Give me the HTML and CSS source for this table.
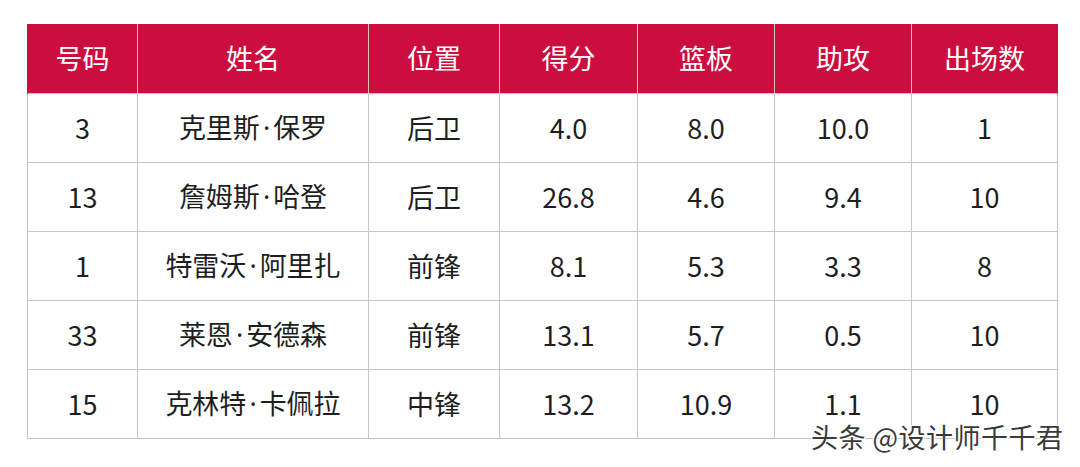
FILE: index.html
```html
<!DOCTYPE html>
<html lang="zh-CN">
<head>
<meta charset="utf-8">
<link rel="stylesheet" href="styles.css">
</head>
<body>
<div class="page">
  <table class="stats">
    <colgroup>
      <col style="width:110px"><col style="width:231px"><col style="width:131px"><col style="width:138px"><col style="width:137px"><col style="width:137px"><col style="width:146px">
    </colgroup>
    <thead>
      <tr><th>号码</th><th>姓名</th><th>位置</th><th>得分</th><th>篮板</th><th>助攻</th><th>出场数</th></tr>
    </thead>
    <tbody>
      <tr><td>3</td><td>克里斯<span class="dot">·</span>保罗</td><td>后卫</td><td>4.0</td><td>8.0</td><td>10.0</td><td>1</td></tr>
      <tr><td>13</td><td>詹姆斯<span class="dot">·</span>哈登</td><td>后卫</td><td>26.8</td><td>4.6</td><td>9.4</td><td>10</td></tr>
      <tr><td>1</td><td>特雷沃<span class="dot">·</span>阿里扎</td><td>前锋</td><td>8.1</td><td>5.3</td><td>3.3</td><td>8</td></tr>
      <tr><td>33</td><td>莱恩<span class="dot">·</span>安德森</td><td>前锋</td><td>13.1</td><td>5.7</td><td>0.5</td><td>10</td></tr>
      <tr><td>15</td><td>克林特<span class="dot">·</span>卡佩拉</td><td>中锋</td><td>13.2</td><td>10.9</td><td>1.1</td><td>10</td></tr>
    </tbody>
  </table>
  <div class="watermark">头条 @设计师千千君</div>
</div>
</body>
</html>
```

FILE: styles.css
```css
html, body {
  margin: 0;
  padding: 0;
  background: #ffffff;
}
.page {
  position: relative;
  width: 1080px;
  height: 467px;
  padding: 24px 0 0 27px;
  box-sizing: border-box;
  font-family: "Noto Sans CJK SC", "Noto Sans", sans-serif;
}
.stats {
  border-collapse: collapse;
  table-layout: fixed;
  width: 1030px;
}
.stats th {
  background: #cc0d40;
  color: #ffffff;
  font-weight: 400;
  font-size: 27px;
  height: 66px;
  padding: 0 0 3px 0;
  text-align: center;
  border-left: 1px solid #dcc8a8;
  line-height: 27px;
}
.stats th:first-child {
  border-left: 1px solid #cc0d40;
}
.stats th:last-child {
  border-right: 1px solid #cc0d40;
}
.stats td {
  color: #1e1e1e;
  font-size: 27px;
  height: 66px;
  padding: 0 0 2px 0;
  text-align: center;
  border: 1px solid #c6c6c6;
  line-height: 27px;
}
.dot {
  font-family: "Noto Sans", sans-serif;
  margin: 0 3px;
}
.watermark {
  position: absolute;
  left: 811px;
  top: 423px;
  font-size: 27px;
  line-height: 1;
  color: #3a3a3a;
  letter-spacing: 0.5px;
  white-space: nowrap;
  text-shadow: 1px 0 0 #fff, -1px 0 0 #fff, 0 1px 0 #fff, 0 -1px 0 #fff, 1px 1px 0 #fff, -1px -1px 0 #fff, 1px -1px 0 #fff, -1px 1px 0 #fff;
}
```
